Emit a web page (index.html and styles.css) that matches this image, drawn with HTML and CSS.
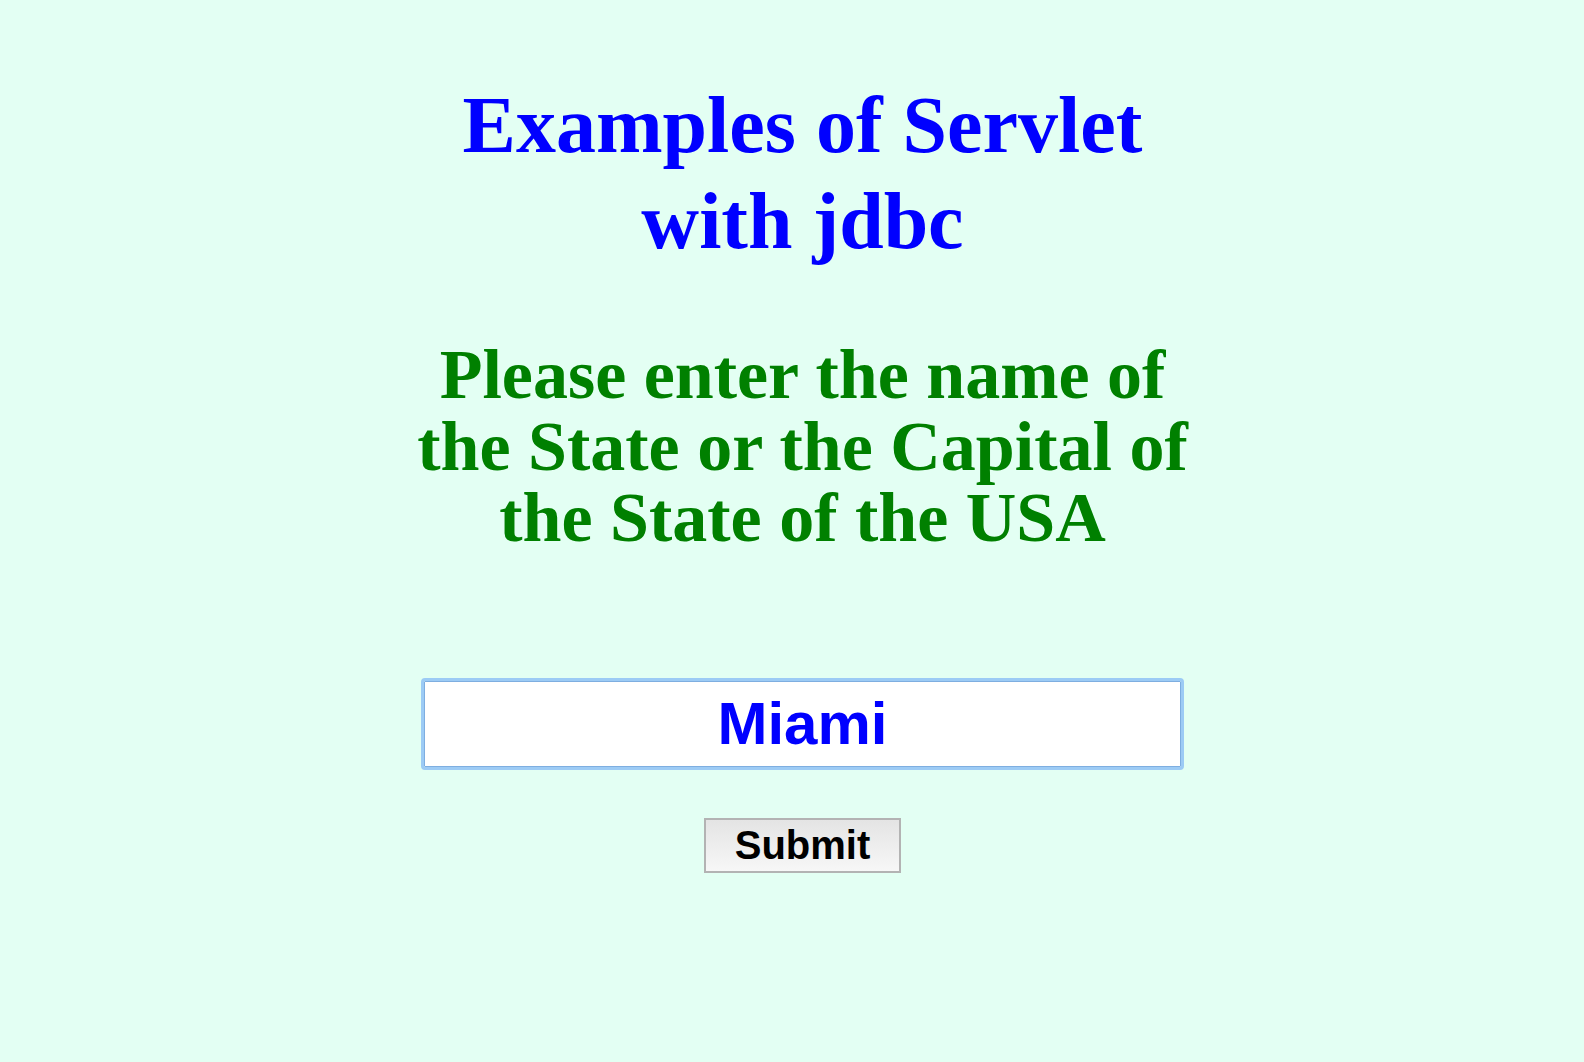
FILE: index.html
```html
<!DOCTYPE html>
<html lang="en">
<head>
<meta charset="utf-8">
<title>Examples of Servlet with jdbc</title>
<link rel="stylesheet" href="styles.css">
</head>
<body>
<main class="page">
  <h1 class="title">Examples of Servlet with jdbc</h1>
  <h2 class="prompt">Please enter the name of the State or the Capital of the State of the USA</h2>
  <form class="query-form">
    <input class="query-input" type="text" name="name" value="Miami">
    <button class="submit-btn" type="submit">Submit</button>
  </form>
</main>
</body>
</html>
```
FILE: styles.css
```css
html, body {
  margin: 0;
  background: #e3fff3;
}
body {
  padding: 0 0 0 21px;
  min-height: 1062px;
  box-sizing: border-box;
}
.page {
  width: 792px;
  margin: 0 auto;
  padding-top: 77px;
  text-align: center;
}
.title {
  margin: 0;
  font-family: "Liberation Serif", "Times New Roman", serif;
  font-weight: bold;
  font-size: 80px;
  line-height: 96px;
  color: #0000ff;
}
.prompt {
  margin: 70px 0 0;
  font-family: "Liberation Serif", "Times New Roman", serif;
  font-weight: bold;
  font-size: 70px;
  line-height: 71.5px;
  color: #008000;
}
.query-form {
  display: flex;
  flex-direction: column;
  align-items: center;
  margin-top: 127px;
}
.query-input {
  box-sizing: border-box;
  width: 757px;
  height: 86px;
  margin: 0;
  padding: 0 10px;
  border: 1px solid #7eaee0;
  outline: 3px solid #9ccbf5;
  outline-offset: 0;
  border-radius: 1px;
  background: #ffffff;
  font-family: "Liberation Sans", Arial, sans-serif;
  font-weight: bold;
  font-size: 60px;
  color: #0000ff;
  text-align: center;
}
.submit-btn {
  box-sizing: border-box;
  width: 197px;
  height: 55px;
  margin-top: 51px;
  padding: 0;
  border: 2px solid #b3b3b3;
  border-radius: 0;
  background: linear-gradient(#e4e4e4, #f7f7f7);
  font-family: "Liberation Sans", Arial, sans-serif;
  font-weight: bold;
  font-size: 40px;
  line-height: 1;
  color: #000000;
}
```
